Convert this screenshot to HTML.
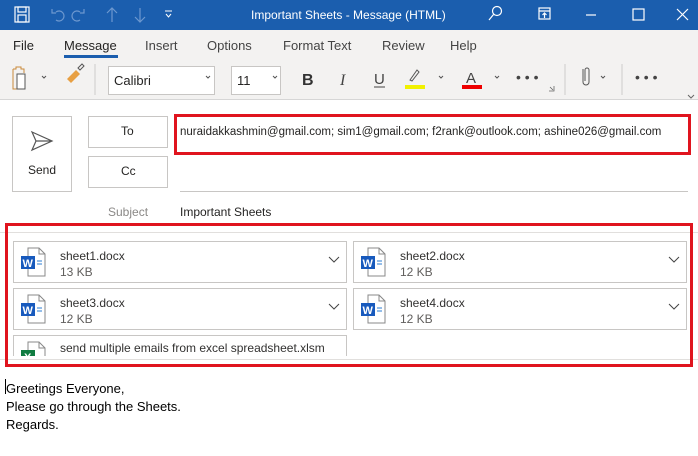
<!DOCTYPE html>
<html><head><style>
*{margin:0;padding:0;box-sizing:border-box}
body{width:698px;height:456px;overflow:hidden;background:#fff;font-family:"Liberation Sans",sans-serif;position:relative;color:#252423}
.a{position:absolute}
.t{font-size:12px;white-space:nowrap}
.card{position:absolute;border:1px solid #c8c6c4;background:#fff;width:334px;height:42px}
.card .n{position:absolute;left:46px;top:7px;font-size:12px;color:#323130;white-space:nowrap}
.card .s{position:absolute;left:46px;top:23px;font-size:12px;color:#605e5c}
.card .c{position:absolute;right:6px;top:12px}
.ic{position:absolute;left:6px;top:5px}
</style></head><body>
<div class="a" style="left:0;top:0;width:698px;height:30px;background:#1b5eae"></div>
<svg class="a" style="left:0;top:0" width="698" height="30">
<g fill="none" stroke="#fff" stroke-width="1.2"><rect x="15" y="7" width="14" height="15"/><rect x="18" y="7" width="8" height="5"/><rect x="18" y="15" width="8" height="7"/></g>
<g fill="none" stroke="#6d98cf" stroke-width="1.2"><path d="M56 12 a5 5 0 1 1 0 8 M52 9 v4 h4"/><path d="M80 12 a5 5 0 1 0 0 8 M84 9 v4 h-4"/><path d="M112 22 V8 M107 13 l5-5 5 5"/><path d="M140 8 V22 M135 17 l5 5 5-5"/></g>
<path d="M165 11 h7 M166 14 l2.5 3 2.5-3" stroke="#fff" fill="none"/>
<g fill="none" stroke="#fff" stroke-width="1.2"><circle cx="497" cy="11" r="4.5"/><path d="M493.5 14.5 L489 20"/><rect x="539" y="8" width="11" height="11"/><path d="M539 11 h11 M544.5 13 v5 M542.5 15 l2-2 2 2"/><path d="M586 15 h10"/><rect x="633" y="9" width="11" height="11"/><path d="M677 9 l11 11 M688 9 l-11 11"/></g>
<text x="251" y="19" fill="#fff" font-size="12" font-family="Liberation Sans">Important Sheets  -  Message (HTML)</text>
</svg>
<div class="a" style="left:0;top:30px;width:698px;height:70px;background:#f3f2f1;border-bottom:1px solid #d6d6d6"></div>
<div class="a t" style="left:13px;top:38px;font-size:13px">File</div>
<div class="a t" style="left:64px;top:38px;font-size:13px">Message</div>
<div class="a" style="left:64px;top:55px;width:54px;height:3px;background:#1b5eae"></div>
<div class="a t" style="left:145px;top:38px;font-size:13px;color:#444">Insert</div>
<div class="a t" style="left:207px;top:38px;font-size:13px;color:#444">Options</div>
<div class="a t" style="left:283px;top:38px;font-size:13px;color:#444">Format Text</div>
<div class="a t" style="left:382px;top:38px;font-size:13px;color:#444">Review</div>
<div class="a t" style="left:450px;top:38px;font-size:13px;color:#444">Help</div>
<div class="a" style="left:108px;top:66px;width:107px;height:29px;background:#fff;border:1px solid #c8c6c4"></div>
<div class="a t" style="left:114px;top:73px;font-size:13px">Calibri</div>
<div class="a" style="left:231px;top:66px;width:50px;height:29px;background:#fff;border:1px solid #c8c6c4"></div>
<div class="a t" style="left:237px;top:73px;font-size:13px">11</div>
<svg class="a" style="left:0;top:58px" width="698" height="42">
<g fill="none" stroke="#555" stroke-width="1"><path d="M13 11 h3 v-2 h5 v2 h3 v4" stroke="#c98a3a"/><path d="M13 11 v20 h4" stroke="#c98a3a"/><rect x="17" y="16" width="8" height="15" fill="#fff"/><path d="M42 18 l2 2 2-2 M206 18 l2 2 2-2 M273 18 l2 2 2-2 M439 18 l2 2 2-2 M495 18 l2 2 2-2 M601 18 l2 2 2-2"/></g>
<path d="M67 21 l9-9 4 4 -9 9 z" fill="#e8a043"/><path d="M78 10 l4-4 2 2 -4 4z" fill="none" stroke="#555"/>
<path d="M95 6 v31" stroke="#ccc"/><path d="M565 6 v31 M622 6 v31" stroke="#ccc"/>
<text x="302" y="27" font-size="16" font-weight="bold" fill="#333" font-family="Liberation Sans">B</text>
<text x="340" y="27" font-size="16" font-style="italic" fill="#444" font-family="Liberation Serif">I</text>
<text x="374" y="26" font-size="15" fill="#444" font-family="Liberation Sans">U</text><path d="M374 29 h11" stroke="#444"/>
<path d="M410 22 l7-10 2 2 -7 9z" fill="none" stroke="#555"/><rect x="405" y="27" width="20" height="4" fill="#f1f100"/>
<text x="466" y="25" font-size="15" fill="#444" font-family="Liberation Sans">A</text><rect x="462" y="27" width="20" height="4" fill="#e00"/>
<text x="516" y="24" font-size="14" fill="#444" font-family="Liberation Sans">• • •</text>
<text x="635" y="24" font-size="14" fill="#444" font-family="Liberation Sans">• • •</text>
<path d="M583 11 v13 a3 3 0 0 0 6 0 v-12 a2 2 0 0 0 -4 0 v11" fill="none" stroke="#555"/>
<path d="M549 33 h5 v-5 M550 29 l3 3" fill="none" stroke="#666" stroke-width=".8"/>
<path d="M688 37 l3 3 3-3" fill="none" stroke="#666"/>
</svg>
<div class="a" style="left:12px;top:116px;width:60px;height:76px;border:1px solid #c8c6c4"></div>
<svg class="a" style="left:30px;top:130px" width="26" height="22"><path d="M2 2 L22 11 L2 20 L6 11 Z M6 11 H22" fill="none" stroke="#555" stroke-width="1.2"/></svg>
<div class="a t" style="left:28px;top:163px">Send</div>
<div class="a" style="left:88px;top:116px;width:80px;height:32px;border:1px solid #c8c6c4"></div>
<div class="a t" style="left:121px;top:124px">To</div>
<div class="a" style="left:88px;top:156px;width:80px;height:32px;border:1px solid #c8c6c4"></div>
<div class="a t" style="left:121px;top:164px">Cc</div>
<div class="a" style="left:174px;top:114px;width:517px;height:41px;border:3px solid #e0141e"></div>
<div class="a t" style="left:180px;top:126px;font-size:11.5px">nuraidakkashmin@gmail.com; sim1@gmail.com; f2rank@outlook.com; ashine026@gmail.com</div>
<div class="a" style="left:180px;top:191px;width:508px;height:1px;background:#c8c6c4"></div>
<div class="a t" style="left:108px;top:205px;color:#8a8886">Subject</div>
<div class="a t" style="left:180px;top:205px">Important Sheets</div>
<div class="a" style="left:0;top:232px;width:698px;height:1px;background:#e1dfdd"></div>
<div class="a" style="left:0;top:359px;width:698px;height:1px;background:#e1dfdd"></div>
<div class="card" style="left:13px;top:241px"><svg class="ic" width="28" height="30"><path d="M8 1 h11 l6 6 v22 h-17z" fill="#fff" stroke="#888"/><path d="M19 1 v6 h6" fill="none" stroke="#888"/><rect x="1" y="9" width="14" height="13" fill="#185abd"/><text x="2.5" y="20" fill="#fff" font-size="11" font-weight="bold" font-family="Liberation Sans">W</text><path d="M17 14 h5 M17 17 h5" stroke="#2b7cd3"/></svg><div class="n">sheet1.docx</div><div class="s">13 KB</div><svg class="c" width="12" height="10"><path d="M1 3 l5 5 5-5" fill="none" stroke="#444"/></svg></div>
<div class="card" style="left:353px;top:241px"><svg class="ic" width="28" height="30"><path d="M8 1 h11 l6 6 v22 h-17z" fill="#fff" stroke="#888"/><path d="M19 1 v6 h6" fill="none" stroke="#888"/><rect x="1" y="9" width="14" height="13" fill="#185abd"/><text x="2.5" y="20" fill="#fff" font-size="11" font-weight="bold" font-family="Liberation Sans">W</text><path d="M17 14 h5 M17 17 h5" stroke="#2b7cd3"/></svg><div class="n">sheet2.docx</div><div class="s">12 KB</div><svg class="c" width="12" height="10"><path d="M1 3 l5 5 5-5" fill="none" stroke="#444"/></svg></div>
<div class="card" style="left:13px;top:288px"><svg class="ic" width="28" height="30"><path d="M8 1 h11 l6 6 v22 h-17z" fill="#fff" stroke="#888"/><path d="M19 1 v6 h6" fill="none" stroke="#888"/><rect x="1" y="9" width="14" height="13" fill="#185abd"/><text x="2.5" y="20" fill="#fff" font-size="11" font-weight="bold" font-family="Liberation Sans">W</text><path d="M17 14 h5 M17 17 h5" stroke="#2b7cd3"/></svg><div class="n">sheet3.docx</div><div class="s">12 KB</div><svg class="c" width="12" height="10"><path d="M1 3 l5 5 5-5" fill="none" stroke="#444"/></svg></div>
<div class="card" style="left:353px;top:288px"><svg class="ic" width="28" height="30"><path d="M8 1 h11 l6 6 v22 h-17z" fill="#fff" stroke="#888"/><path d="M19 1 v6 h6" fill="none" stroke="#888"/><rect x="1" y="9" width="14" height="13" fill="#185abd"/><text x="2.5" y="20" fill="#fff" font-size="11" font-weight="bold" font-family="Liberation Sans">W</text><path d="M17 14 h5 M17 17 h5" stroke="#2b7cd3"/></svg><div class="n">sheet4.docx</div><div class="s">12 KB</div><svg class="c" width="12" height="10"><path d="M1 3 l5 5 5-5" fill="none" stroke="#444"/></svg></div>
<div class="card" style="left:13px;top:335px;height:21px;border-bottom:none;overflow:hidden"><svg class="ic" width="28" height="30"><path d="M8 1 h11 l6 6 v22 h-17z" fill="#fff" stroke="#888"/><path d="M19 1 v6 h6" fill="none" stroke="#888"/><rect x="1" y="9" width="14" height="13" fill="#107c41"/><text x="4" y="20" fill="#fff" font-size="11" font-weight="bold" font-family="Liberation Sans">X</text></svg><div class="n" style="top:5px">send multiple emails from excel spreadsheet.xlsm</div></div>
<div class="a" style="left:5px;top:223px;width:688px;height:144px;border:3px solid #e0141e"></div>
<div class="a" style="left:5px;top:379px;width:1px;height:15px;background:#000"></div>
<div class="a" style="left:6px;top:380px;font-size:13px;line-height:18px;color:#000">Greetings Everyone,<br>Please go through the Sheets.<br>Regards.</div>
</body></html>
